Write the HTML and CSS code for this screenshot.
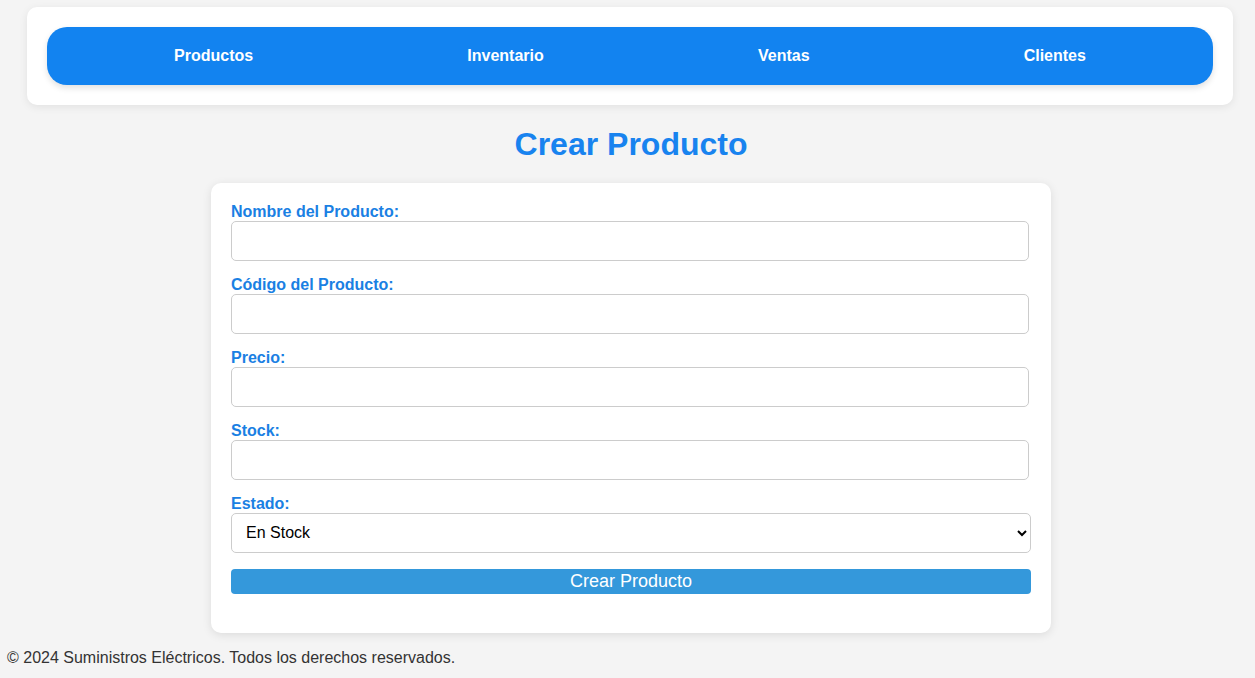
FILE: index.html
```html
<!DOCTYPE html>
<html lang="es">
<head>
<meta charset="UTF-8">
<title>Crear Producto</title>
<link rel="stylesheet" href="styles.css">
</head>
<body>
<header class="site-header">
  <nav class="main-nav">
    <ul class="nav-list">
      <li><a href="#">Productos</a></li>
      <li><a href="#">Inventario</a></li>
      <li><a href="#">Ventas</a></li>
      <li><a href="#">Clientes</a></li>
    </ul>
  </nav>
</header>
<main class="content">
  <h1 class="page-title">Crear Producto</h1>
  <form class="product-form">
    <label class="field-label" for="nombre">Nombre del Producto:</label>
    <input class="field-input" type="text" id="nombre">
    <label class="field-label" for="codigo">Código del Producto:</label>
    <input class="field-input" type="text" id="codigo">
    <label class="field-label" for="precio">Precio:</label>
    <input class="field-input" type="text" id="precio">
    <label class="field-label" for="stock">Stock:</label>
    <input class="field-input" type="text" id="stock">
    <label class="field-label" for="estado">Estado:</label>
    <select class="field-select" id="estado">
      <option>En Stock</option>
      <option>Agotado</option>
    </select>
    <button class="submit-btn" type="button">Crear Producto</button>
  </form>
</main>
<footer class="site-footer">
  <p class="footer-text">© 2024 Suministros Eléctricos. Todos los derechos reservados.</p>
</footer>
</body>
</html>
```
FILE: styles.css
```css
html, body {
  margin: 0;
  padding: 0;
}
body {
  background: #f4f4f4;
  font-family: "Liberation Sans", Arial, sans-serif;
  color: #333;
  overflow: hidden;
}
.site-header {
  margin: 7px 22px 0 27px;
  padding: 20px;
  background: #fff;
  border-radius: 10px;
  box-shadow: 0 2px 8px rgba(0,0,0,0.08);
}
.main-nav {
  background: #1283f0;
  border-radius: 20px;
  padding: 20px 20px 19.5px 20px;
  box-shadow: 0 3px 6px rgba(0,0,0,0.12);
}
.nav-list {
  list-style: none;
  margin: 0;
  padding: 0;
  display: flex;
  justify-content: space-around;
}
.nav-list a {
  color: #fff;
  font-weight: bold;
  font-size: 16px;
  line-height: 18px;
  text-decoration: none;
  display: block;
}
.content {
  margin: 0 21px 0 28px;
}
.page-title {
  text-align: center;
  color: #1883ef;
  font-size: 32px;
  line-height: 37px;
  margin: 21px 0 20px;
}
.product-form {
  width: 840px;
  box-sizing: border-box;
  margin: 0 auto;
  background: #fff;
  border-radius: 10px;
  padding: 20px 20px 39px;
  box-shadow: 0 2px 10px rgba(0,0,0,0.1);
  display: flex;
  flex-direction: column;
  align-items: flex-start;
}
.field-label {
  display: block;
  color: #1a80e3;
  font-weight: bold;
  font-size: 16px;
  line-height: 18px;
}
.field-input {
  box-sizing: border-box;
  width: 798px;
  height: 40px;
  margin: 0 0 15px;
  padding: 10px;
  border: 1px solid #ccc;
  border-radius: 5px;
  font-size: 16px;
  font-family: "Liberation Sans", Arial, sans-serif;
}
.field-select {
  box-sizing: border-box;
  width: 800px;
  height: 40px;
  margin: 0;
  padding: 0 6px 0 10px;
  border: 1px solid #ccc;
  border-radius: 5px;
  background: #fff;
  color: #000;
  font-size: 16px;
  font-family: "Liberation Sans", Arial, sans-serif;
}
.submit-btn {
  width: 800px;
  height: 25px;
  margin-top: 16px;
  padding: 0;
  border: none;
  border-radius: 4px;
  background: #3498db;
  color: #fff;
  font-size: 18px;
  font-family: "Liberation Sans", Arial, sans-serif;
  line-height: 25px;
}
.site-footer {
  padding-left: 7px;
}
.footer-text {
  margin: 16px 0 0;
  font-size: 16px;
  line-height: 18px;
  color: #333;
}
```
